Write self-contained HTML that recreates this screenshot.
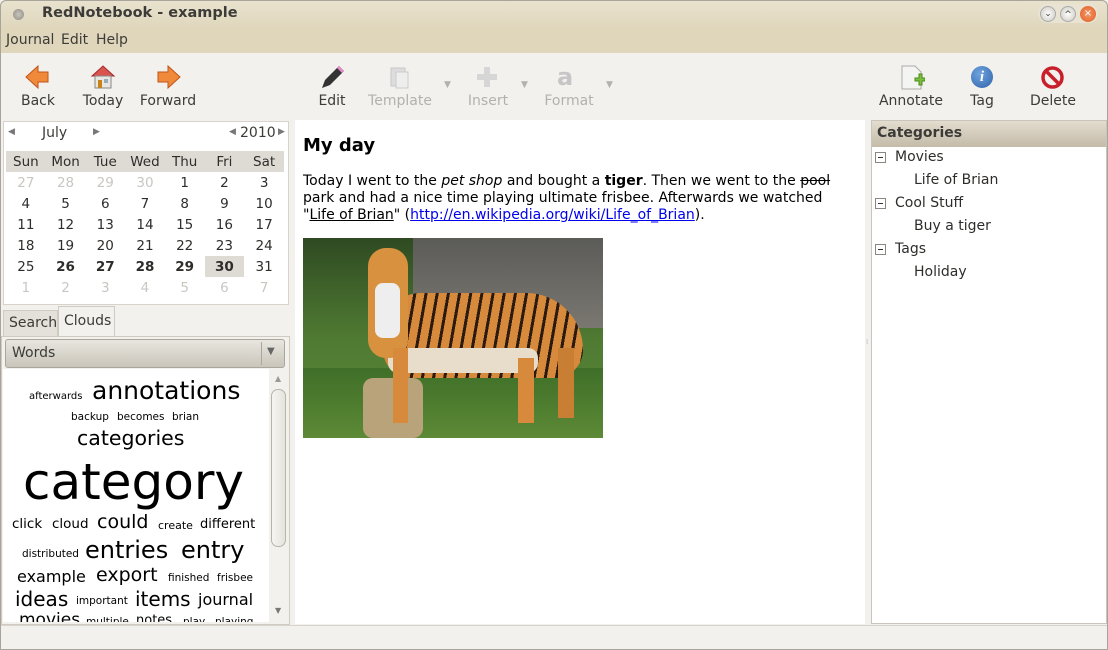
<!DOCTYPE html>
<html><head><meta charset="utf-8"><style>
*{margin:0;padding:0;box-sizing:border-box}
body{width:1108px;height:650px;overflow:hidden;background:#f2f1ee;font-family:"DejaVu Sans","Liberation Sans",sans-serif;font-size:13px;color:#3c3b37;position:relative}
.a{position:absolute}
.title{left:0;top:0;width:1108px;height:28px;background:linear-gradient(#e9e3cf,#dfd6bc);border-radius:6px 6px 0 0}
.menu{left:0;top:28px;width:1108px;height:25px;background:#dfd6bc}
.tb{top:53px;left:0;width:1108px;height:66px;background:#f2f1ee}
.lbl{font-size:14px;text-align:center;width:80px}
.dis{color:#b3b1ab}
.cal{left:3px;top:121px;width:286px;height:184px;background:#fff;border:1px solid #d7d3cb}
.cal table{position:absolute;left:2px;top:29px;width:278px;border-collapse:collapse;font-size:13.5px;table-layout:fixed}
.cal td{text-align:center;height:21px;color:#2e2d2b}
.cal tr.h td{background:#dedbd4;height:21px}
.g{color:#c9c7c2!important}
.b{font-weight:bold}
.cloud{left:3px;top:369px;width:266px;height:253px;background:#fff;overflow:hidden;color:#000}
.cloud span{position:absolute;white-space:nowrap;line-height:1}
.ed{left:295px;top:120px;width:570px;height:504px;background:#fff}
.rp{left:871px;top:120px;width:236px;height:504px;background:#fff;border:1px solid #c9c5bd}
.rp div{position:absolute;font-size:14px;color:#2e2d2b}
.box{width:11px;height:11px;border:1px solid #8a877f;background:#fff;font-size:0}
.box:after{content:"";position:absolute;left:2px;top:4px;width:5px;height:1px;background:#333}
</style></head><body>
<div class="a title"></div>
<div class="a" style="left:13px;top:9px;width:11px;height:11px;border-radius:50%;background:radial-gradient(#c9c6bd,#8d8a82)"></div>
<div class="a" style="left:42px;top:5px;font-weight:bold;font-size:14.5px;color:#3c3b37">RedNotebook - example</div>
<div class="a" style="left:1038px;top:4px;width:60px;height:19px;border-radius:10px;background:#e8e3d3"></div>
<div class="a" style="left:1040px;top:6px;width:16px;height:16px;border-radius:50%;background:radial-gradient(#fff,#cbc7bd);border:1px solid #aaa;font-size:9px;text-align:center;line-height:14px">⌄</div>
<div class="a" style="left:1060px;top:6px;width:16px;height:16px;border-radius:50%;background:radial-gradient(#fff,#cbc7bd);border:1px solid #aaa;font-size:9px;text-align:center;line-height:16px">^</div>
<div class="a" style="left:1080px;top:6px;width:16px;height:16px;border-radius:50%;background:radial-gradient(#f59a6a,#e05a20);color:#fff;font-size:10px;text-align:center;line-height:15px">×</div>
<div class="a menu"></div>
<div class="a" style="left:6px;top:32px;font-size:14px">Journal</div>
<div class="a" style="left:61px;top:32px;font-size:14px">Edit</div>
<div class="a" style="left:96px;top:32px;font-size:14px">Help</div>
<div class="a tb"></div>
<svg class="a" style="left:24px;top:64px" width="28" height="26"><path d="M2 13 L14 2 V8 H24 V18 H14 V24 Z" fill="#f08a3a" stroke="#c0541a"/></svg>
<svg class="a" style="left:89px;top:63px" width="28" height="28"><path d="M3 13 L14 3 L25 13 Z" fill="#d9534f" stroke="#a52a2a"/><rect x="6" y="13" width="16" height="12" fill="#e8e6e0" stroke="#888"/><rect x="9" y="17" width="4" height="8" fill="#c8821a"/><rect x="15" y="16" width="4" height="4" fill="#9ab"/></svg>
<svg class="a" style="left:154px;top:64px" width="28" height="26"><path d="M26 13 L14 2 V8 H4 V18 H14 V24 Z" fill="#f08a3a" stroke="#c0541a"/></svg>
<svg class="a" style="left:318px;top:64px" width="28" height="28"><path d="M4 24 L7 16 L21 2 L26 7 L12 21 Z" fill="#333"/><path d="M21 2 L26 7 L24 9 L19 4Z" fill="#e58ac9"/></svg>
<svg class="a" style="left:388px;top:64px" width="24" height="26"><rect x="3" y="4" width="14" height="18" fill="#ddd" stroke="#c7c7c7"/><rect x="8" y="8" width="12" height="16" fill="#eee" stroke="#ccc"/></svg>
<svg class="a" style="left:476px;top:66px" width="22" height="22"><path d="M8 1H14V8H21V14H14V21H8V14H1V8H8Z" fill="#d6d6d6"/></svg>
<div class="a dis" style="left:557px;top:63px;font-size:24px;font-weight:bold;color:#c6c6c6">a</div>
<div class="a dis" style="left:444px;top:80px;font-size:9px">▼</div>
<div class="a dis" style="left:521px;top:80px;font-size:9px">▼</div>
<div class="a dis" style="left:606px;top:80px;font-size:9px">▼</div>
<svg class="a" style="left:899px;top:64px" width="26" height="28"><path d="M3 2H16L22 8V25H3Z" fill="#f4f4f2" stroke="#aaa"/><path d="M16 14h4v-4h3v4h3v3h-3v4h-3v-4h-4z" fill="#7cc142" stroke="#4a8a1a"/></svg>
<div class="a" style="left:971px;top:66px;width:22px;height:22px;border-radius:50%;background:radial-gradient(circle at 40% 35%,#6fa4e0,#2f63a8);color:#fff;font:italic bold 15px 'Liberation Serif',serif;text-align:center;line-height:22px">i</div>
<svg class="a" style="left:1041px;top:66px" width="23" height="23"><circle cx="11.5" cy="11.5" r="9.5" fill="none" stroke="#c8202a" stroke-width="3.5"/><path d="M5 5L18 18" stroke="#c8202a" stroke-width="3.5"/></svg>
<div class="a lbl" style="left:-2px;top:93px">Back</div>
<div class="a lbl" style="left:63px;top:93px">Today</div>
<div class="a lbl" style="left:128px;top:93px">Forward</div>
<div class="a lbl" style="left:292px;top:93px">Edit</div>
<div class="a lbl dis" style="left:360px;top:93px">Template</div>
<div class="a lbl dis" style="left:448px;top:93px">Insert</div>
<div class="a lbl dis" style="left:529px;top:93px">Format</div>
<div class="a lbl" style="left:871px;top:93px">Annotate</div>
<div class="a lbl" style="left:942px;top:93px">Tag</div>
<div class="a lbl" style="left:1013px;top:93px">Delete</div>
<div class="a cal">
<div class="a" style="left:4px;top:5px;font-size:9px;color:#777">◀</div>
<div class="a" style="left:38px;top:3px;font-size:14px">July</div>
<div class="a" style="left:89px;top:5px;font-size:9px;color:#777">▶</div>
<div class="a" style="left:225px;top:5px;font-size:9px;color:#777">◀</div>
<div class="a" style="left:236px;top:3px;font-size:14px">2010</div>
<div class="a" style="left:274px;top:5px;font-size:9px;color:#777">▶</div>
<table>
<tr class="h"><td>Sun</td><td>Mon</td><td>Tue</td><td>Wed</td><td>Thu</td><td>Fri</td><td>Sat</td></tr>
<tr><td class="g">27</td><td class="g">28</td><td class="g">29</td><td class="g">30</td><td>1</td><td>2</td><td>3</td></tr>
<tr><td>4</td><td>5</td><td>6</td><td>7</td><td>8</td><td>9</td><td>10</td></tr>
<tr><td>11</td><td>12</td><td>13</td><td>14</td><td>15</td><td>16</td><td>17</td></tr>
<tr><td>18</td><td>19</td><td>20</td><td>21</td><td>22</td><td>23</td><td>24</td></tr>
<tr><td>25</td><td class="b">26</td><td class="b">27</td><td class="b">28</td><td class="b">29</td><td class="b" style="background:#dedbd4">30</td><td>31</td></tr>
<tr><td class="g">1</td><td class="g">2</td><td class="g">3</td><td class="g">4</td><td class="g">5</td><td class="g">6</td><td class="g">7</td></tr>
</table></div>
<div class="a" style="left:3px;top:310px;width:55px;height:26px;background:#e4e1da;border:1px solid #cfcbc2;border-bottom:none;font-size:14px;padding:4px 0 0 5px">Search</div>
<div class="a" style="left:58px;top:306px;width:57px;height:31px;background:#f2f1ee;border:1px solid #cfcbc2;border-bottom:none;font-size:14px;padding:6px 0 0 5px">Clouds</div>
<div class="a" style="left:1px;top:336px;width:289px;height:289px;border:1px solid #cfcbc2"></div>
<div class="a" style="left:5px;top:339px;width:280px;height:29px;border:1px solid #a9a69d;border-radius:3px;background:linear-gradient(#e8e6df,#c9c5ba);font-size:14px;padding:5px 0 0 6px">Words</div>
<div class="a" style="left:261px;top:342px;width:1px;height:23px;background:#a9a69d"></div>
<div class="a" style="left:267px;top:346px;font-size:10px;color:#666">▼</div>
<div class="a cloud">
<span style="left:26px;top:23px;font-size:10px">afterwards</span>
<span style="left:89px;top:9px;font-size:25px">annotations</span>
<span style="left:68px;top:43px;font-size:10.5px">backup</span>
<span style="left:114px;top:43px;font-size:10.5px">becomes</span>
<span style="left:169px;top:43px;font-size:10.5px">brian</span>
<span style="left:74px;top:59px;font-size:20.5px">categories</span>
<span style="left:20px;top:88px;font-size:50px">category</span>
<span style="left:9px;top:149px;font-size:13.5px">click</span>
<span style="left:49px;top:149px;font-size:13.5px">cloud</span>
<span style="left:94px;top:144px;font-size:19px">could</span>
<span style="left:155px;top:151px;font-size:11px">create</span>
<span style="left:197px;top:149px;font-size:13px">different</span>
<span style="left:19px;top:180px;font-size:10.5px">distributed</span>
<span style="left:82px;top:169px;font-size:24px">entries</span>
<span style="left:178px;top:169px;font-size:24px">entry</span>
<span style="left:14px;top:200px;font-size:16px">example</span>
<span style="left:93px;top:197px;font-size:19px">export</span>
<span style="left:165px;top:204px;font-size:10.5px">finished</span>
<span style="left:214px;top:204px;font-size:10.5px">frisbee</span>
<span style="left:12px;top:220px;font-size:20px">ideas</span>
<span style="left:73px;top:227px;font-size:10.5px">important</span>
<span style="left:132px;top:220px;font-size:20px">items</span>
<span style="left:195px;top:223px;font-size:16px">journal</span>
<span style="left:16px;top:243px;font-size:17px">movies</span>
<span style="left:83px;top:248px;font-size:10.5px">multiple</span>
<span style="left:133px;top:245px;font-size:13px">notes</span>
<span style="left:180px;top:248px;font-size:10.5px">play</span>
<span style="left:212px;top:248px;font-size:10.5px">playing</span>
</div>
<div class="a" style="left:270px;top:370px;width:17px;height:252px;background:#f2f1ee"></div>
<div class="a" style="left:275px;top:374px;font-size:8px;color:#999">▲</div>
<div class="a" style="left:275px;top:606px;font-size:8px;color:#777">▼</div>
<div class="a" style="left:271px;top:389px;width:15px;height:158px;border:1px solid #b8b4aa;border-radius:7px;background:linear-gradient(90deg,#f6f5f2,#e6e3dc)"></div>
<div class="a ed">
<div class="a" style="left:8px;top:15px;font-size:18px;font-weight:bold;color:#000">My day</div>
<div class="a" style="left:8px;top:53px;font-size:14px;line-height:17px;color:#000;white-space:nowrap">Today I went to the <i>pet shop</i> and bought a <b>tiger</b>. Then we went to the <s>pool</s><br>park and had a nice time playing ultimate frisbee. Afterwards we watched<br>"<u>Life of Brian</u>" (<u style="color:#0000ee">http://en.wikipedia.org/wiki/Life_of_Brian</u>).</div>
<div class="a" style="left:8px;top:118px;width:300px;height:200px;overflow:hidden;background:linear-gradient(#2f4a22,#4f7a32 50%,#5a8a3a)">
<div class="a" style="left:110px;top:0;width:190px;height:90px;background:linear-gradient(#5b5b58,#7a7770)"></div>
<div class="a" style="left:0;top:130px;width:300px;height:70px;background:linear-gradient(#3f6e28,#5c8a36)"></div>
<div class="a" style="left:60px;top:140px;width:60px;height:60px;background:#b9a37a;border-radius:10px"></div>
<div class="a" style="left:80px;top:55px;width:200px;height:85px;border-radius:40px 60px 30px 30px;background:repeating-linear-gradient(100deg,#d88a3c 0 8px,#2a1a10 8px 11px)"></div>
<div class="a" style="left:85px;top:110px;width:150px;height:25px;background:#e8dccb;border-radius:10px"></div>
<div class="a" style="left:65px;top:10px;width:40px;height:110px;border-radius:18px;background:#d8913f"></div>
<div class="a" style="left:72px;top:45px;width:25px;height:55px;background:#eee;border-radius:8px"></div>
<div class="a" style="left:90px;top:110px;width:15px;height:75px;background:#d88a3c"></div>
<div class="a" style="left:215px;top:120px;width:16px;height:65px;background:#d88a3c"></div>
<div class="a" style="left:255px;top:110px;width:16px;height:70px;background:#c87f34"></div>
</div>
</div>
<div class="a" style="left:866px;top:338px;font-size:7px;color:#aaa">⁞</div>
<div class="a rp">
<div style="left:0;top:0;width:234px;height:26px;background:linear-gradient(#e3ddcf,#c4bba8);font-weight:bold;padding:4px 0 0 5px;color:#3c3b37">Categories</div>
<div class="box" style="left:3px;top:31px"></div><div style="left:23px;top:28px">Movies</div>
<div style="left:42px;top:51px">Life of Brian</div>
<div class="box" style="left:3px;top:77px"></div><div style="left:23px;top:74px">Cool Stuff</div>
<div style="left:42px;top:97px">Buy a tiger</div>
<div class="box" style="left:3px;top:123px"></div><div style="left:23px;top:120px">Tags</div>
<div style="left:42px;top:143px">Holiday</div>
</div>
<div class="a" style="left:0;top:625px;width:1108px;height:25px;background:#f2f1ee;border-top:1px solid #d8d4cc"></div>
<div class="a" style="left:0;top:0;width:1108px;height:650px;border:1px solid #a8a49a;border-radius:6px 6px 0 0;pointer-events:none"></div>
</body></html>
